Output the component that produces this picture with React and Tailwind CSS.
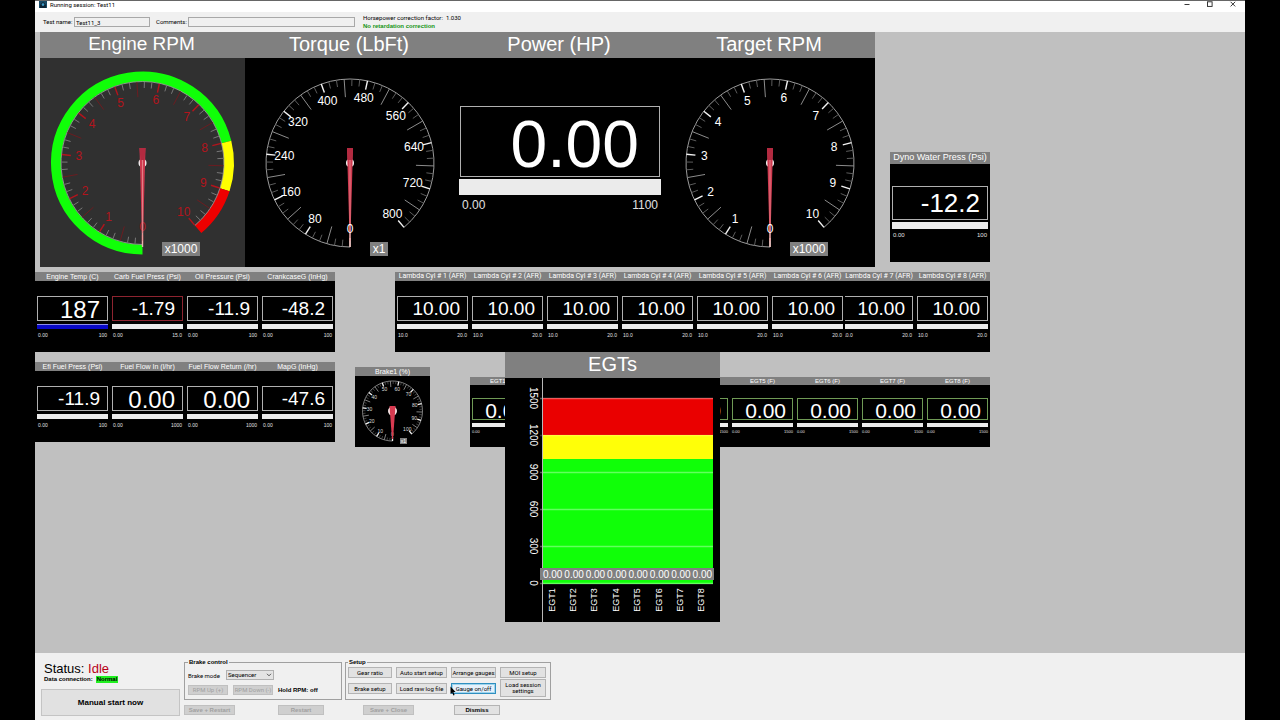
import React from "react";

const SANS = "font-['Liberation_Sans',Arial,sans-serif]";
const UI = "font-['Roboto','Liberation_Sans',sans-serif]";

/* ---------- dials ---------- */

const polar = (cx, cy, r, deg) => {
  const a = (deg * Math.PI) / 180;
  return [cx - r * Math.sin(a), cy + r * Math.cos(a)];
};

function arc(cx, cy, r, from, to) {
  const [x1, y1] = polar(cx, cy, r, from);
  const [x2, y2] = polar(cx, cy, r, to);
  return `M${x1} ${y1}A${r} ${r} 0 ${to - from > 180 ? 1 : 0} 1 ${x2} ${y2}`;
}

function Ticks({ cx, cy, r, red, lengths, widths }) {
  const out = [];
  for (let i = 0; i <= 60; i++) {
    const kind = i % 6 === 0 ? 0 : i % 3 === 0 ? 1 : 2;
    const deg = (i * 32) / 6;
    const [x1, y1] = polar(cx, cy, r, deg);
    const [x2, y2] = polar(cx, cy, r - lengths[kind], deg);
    const colors = red ? ["#b3141c", "#6b1c20", "#777777"] : ["#f4f4f4", "#8c8c8c", "#5c5c5c"];
    out.push(<line key={i} x1={x1} y1={y1} x2={x2} y2={y2} stroke={colors[kind]} strokeWidth={widths[kind]} />);
  }
  return <g>{out}</g>;
}

function Needle({ cx, cy }) {
  return (
    <g>
      <circle cx={cx} cy={cy} r="4" fill="#f4f4f4" />
      <path d={`M${cx} ${cy + 40}V${cy + 84}`} stroke="#e8b4b0" strokeWidth="1.4" />
      <path d={`M${cx - 3} ${cy - 15}H${cx + 3}L${cx + 0.6} ${cy + 70}H${cx - 0.6}Z`} fill="#cf3a50" />
      <path d={`M${cx - 3} ${cy - 15}H${cx + 3}L${cx + 2} ${cy - 3}H${cx - 2}Z`} fill="#b32a40" />
      <path d={`M${cx} ${cy - 3}V${cy + 78}`} stroke="#e88f92" strokeWidth="0.8" />
    </g>
  );
}

function Badge({ x, y, w, children }) {
  return (
    <g>
      <rect x={x} y={y} width={w} height="14" fill="#808080" />
      <text x={x + w / 2} y={y + 11} fontSize="12" fill="#fff" textAnchor="middle">{children}</text>
    </g>
  );
}

function PlainDial({ labels, unit, unitWidth }) {
  const cx = 105, cy = 105;
  return (
    <svg viewBox="0 0 210 209" className="block h-[209px] w-[210px]">
      <path d={arc(cx, cy, 84, 0, 320)} fill="none" stroke="#9a9a9a" strokeWidth="1" />
      <Ticks cx={cx} cy={cy} r={84} lengths={[9, 18, 7]} widths={[1.4, 1, 1]} />
      <Needle cx={cx} cy={cy} />
      {labels.map((t, i) => {
        const [x, y] = polar(cx, cy, 66, i * 32);
        return <text key={t} x={x} y={y + 4} fontSize="12" fill="#fff" textAnchor="middle">{t}</text>;
      })}
      <Badge x={125} y={184} w={unitWidth}>{unit}</Badge>
    </svg>
  );
}

function EngineDial() {
  const cx = 102.5, cy = 105;
  return (
    <svg viewBox="0 0 205 209" className="block h-[209px] w-[205px] bg-[#303030]">
      <path d={arc(cx, cy, 86.5, 0, 256)} fill="none" stroke="#10ff08" strokeWidth="10" />
      <path d={arc(cx, cy, 86.5, 256, 288)} fill="none" stroke="#ffff00" strokeWidth="10" />
      <path d={arc(cx, cy, 86.5, 288, 320)} fill="none" stroke="#ee0000" strokeWidth="10" />
      <path d={arc(cx, cy, 81.5, 0, 320)} fill="none" stroke="#a0a0a0" strokeWidth="0.8" />
      <Ticks cx={cx} cy={cy} r={81} red lengths={[9, 15, 6]} widths={[1.4, 1, 1]} />
      {[0, 1, 2, 3, 4, 5, 6, 7, 8, 9, 10].map((t) => {
        const [x, y] = polar(cx, cy, 64, t * 32);
        return <text key={t} x={x} y={y + 4} fontSize="12" fill="#b3141c" textAnchor="middle">{t}</text>;
      })}
      <Needle cx={cx} cy={cy} />
      <Badge x={122} y={184} w={38}>x1000</Badge>
    </svg>
  );
}

function BrakeDial() {
  const cx = 37.5, cy = 35;
  return (
    <svg viewBox="0 0 75 71" className="block h-[71px] w-[75px]">
      <path d={arc(cx, cy, 30, 0, 320)} fill="none" stroke="#9a9a9a" strokeWidth="0.8" />
      <Ticks cx={cx} cy={cy} r={30} lengths={[4, 6, 3]} widths={[1.3, 0.9, 0.7]} />
      {[0, 10, 20, 30, 40, 50, 60, 70, 80, 90, 100].map((t, i) => {
        const [x, y] = polar(cx, cy, 23, i * 32);
        return <text key={t} x={x} y={y + 2} fontSize="5" fill="#ddd" textAnchor="middle">{t}</text>;
      })}
      <circle cx={cx} cy={cy} r="4.5" fill="#f4e4e4" />
      <path d={`M${cx - 3} ${cy - 5}H${cx + 3}L${cx + 0.5} ${cy + 28}H${cx - 0.5}Z`} fill="#d83a50" />
      <rect x="45" y="62" width="7" height="6" fill="#808080" />
      <text x="48.5" y="67" fontSize="5" fill="#fff" textAnchor="middle">x1</text>
    </svg>
  );
}

/* ---------- numeric gauges ---------- */

const SIZES = {
  lg: {
    box: "mx-[5px] mt-[48px] h-[71px] pr-5 pt-[5px] text-[66px]",
    bar: "mx-[4px] mt-[2px] h-4",
    range: "mx-[7px] mt-[2px] text-[12px] leading-[16px]",
  },
  md: {
    title: "h-3 text-[9px] leading-[11px]",
    box: "mx-[2px] mt-[22px] h-[34px] pr-[7px] text-[26px]",
    bar: "mx-[2px] mt-[2px] h-[7px]",
    range: "mx-[3px] mt-[2px] text-[6px] leading-[8px]",
  },
  sm: {
    title: "h-[9px] text-[7px] leading-[9px]",
    box: "mx-[2px] mt-[15px] h-[25px] pr-[7px]",
    bar: "mx-[2px] mt-[3px] h-[5px]",
    range: "mx-[3px] mt-[3px] text-[5px] leading-[6px]",
  },
  xs: {
    title: "h-2 text-[6px] leading-[8px]",
    box: "mx-[2px] mt-[13px] h-[22px] pr-[6px] pt-[3px]",
    bar: "mx-[2px] mt-[3px] h-1",
    range: "mx-[2px] mt-[2px] text-[4px] leading-[6px]",
  },
};

function Gauge({ title, value, min, max, size, className = "", valueClass = "", titleClass = "", border = "border-[#b0b0b0]", barClass = "bg-[#ebebeb]" }) {
  const s = SIZES[size];
  return (
    <section className={`shrink-0 bg-black text-white ${className}`}>
      {title && <h3 className={`overflow-hidden bg-[#808080] text-center whitespace-nowrap ${s.title} ${titleClass}`}>{title}</h3>}
      <div className={`flex items-center justify-end border leading-none ${s.box} ${border} ${valueClass}`}>{value}</div>
      <div className={`${s.bar} ${barClass}`} />
      <div className={`flex justify-between text-[#e0e0e0] ${s.range}`}>
        <span>{min}</span>
        <span>{max}</span>
      </div>
    </section>
  );
}

const PRESSURES = [
  ["Engine Temp (C)", "187", "100", true],
  ["Carb Fuel Press (Psi)", "-1.79", "15.0", false],
  ["Oil Pressure (Psi)", "-11.9", "100", false],
  ["CrankcaseG (InHg)", "-48.2", "100", false],
];
const FUEL = [
  ["Efi Fuel Press (Psi)", "-11.9", "100", false],
  ["Fuel Flow In (l/hr)", "0.00", "1000", true],
  ["Fuel Flow Return (/hr)", "0.00", "1000", true],
  ["MapG (InHg)", "-47.6", "100", false],
];

function SmallRow({ items }) {
  return (
    <div className="flex h-20 bg-black">
      {items.map(([title, value, max, tall]) => (
        <Gauge
          key={title}
          size="sm"
          className="w-[75px]"
          title={title}
          value={value}
          min="0.00"
          max={max}
          valueClass={tall ? "text-[24px] pt-[3px]" : "text-[19px]"}
          border={title.startsWith("Carb") ? "border-[#8e2430]" : undefined}
          barClass={title.startsWith("Engine") ? "border-t border-[#8c8ce8] bg-[#0808c8]" : undefined}
        />
      ))}
    </div>
  );
}

/* ---------- EGT chart ---------- */

const CYLINDERS = [1, 2, 3, 4, 5, 6, 7, 8];

function EgtChart() {
  const x0 = 37, x1 = 208, base = 205, step = 37;
  const col = (x1 - x0) / 8;
  return (
    <section className="absolute -top-[25px] left-[35px] w-[215px] bg-black text-white">
      <h2 className="h-[26px] bg-[#808080] text-center text-[20px] leading-[24px]">EGTs</h2>
      <svg viewBox="0 0 215 244" className="block h-[244px] w-[215px]">
        <rect x={x0} y="20" width={x1 - x0} height="37" fill="#ea0000" />
        <rect x={x0} y="57" width={x1 - x0} height="24" fill="#ffff08" />
        <rect x={x0} y="81" width={x1 - x0} height="125" fill="#10ff08" />
        {[0, 300, 600, 900, 1200, 1500].map((v, i) => (
          <g key={v}>
            <path d={`M${x0 - 2} ${base - i * step + 0.5}H${x1}`} stroke="#ffffff" strokeOpacity={v === 1200 ? 0.2 : 0.35} strokeWidth="1.4" />
            <text transform={`translate(25 ${base - i * step}) rotate(90)`} fontSize="10" fill="#fff" textAnchor="middle">{v}</text>
          </g>
        ))}
        <path d="M37.5 0V244" stroke="#b8b8b8" strokeWidth="1" />
        <rect x={x0 - 2} y="190" width={x1 - x0 + 3} height="12" fill="#808080" />
        {CYLINDERS.map((n, i) => (
          <g key={n}>
            <text x={x0 + col * (i + 0.5)} y="200" fontSize="10" fill="#fff" textAnchor="middle">0.00</text>
            <text transform={`translate(${x0 + col * (i + 0.5) + 2} 222) rotate(-90)`} fontSize="9" fill="#fff" textAnchor="middle">{`EGT${n}`}</text>
          </g>
        ))}
      </svg>
    </section>
  );
}

/* ---------- window chrome ---------- */

function TitleBar() {
  return (
    <div className="flex h-3 items-start border-t border-[#666] bg-white pl-[4px]">
      <svg viewBox="0 0 8 8" className="h-2 w-2">
        <rect width="8" height="7" fill="#174a66" />
        <path d="M1 7V4L3 1.5H5L7 4V7Z" fill="#0c2434" />
        <circle cx="4" cy="3.6" r="1.3" fill="#3f9cc8" />
      </svg>
      <h1 className={`ml-[3px] text-[6px] leading-[7px] text-black ${UI}`}>Running session: Test11</h1>
      <div className="ml-auto flex gap-[15px] pr-[8px] text-[#222]">
        <button aria-label="Minimize" className="h-[7px] w-2">
          <svg viewBox="0 0 8 7" className="h-[7px] w-2"><path d="M1.5 3.5H6.5" stroke="currentColor" strokeWidth="0.9" /></svg>
        </button>
        <button aria-label="Maximize" className="h-[7px] w-2">
          <svg viewBox="0 0 8 7" className="h-[7px] w-2"><rect x="1.5" y="0.8" width="4.6" height="4.6" fill="none" stroke="currentColor" strokeWidth="0.9" /></svg>
        </button>
        <button aria-label="Close" className="h-[7px] w-2">
          <svg viewBox="0 0 8 7" className="h-[7px] w-2"><path d="M1.6 0.8L6.2 5.4M6.2 0.8L1.6 5.4" stroke="currentColor" strokeWidth="0.9" /></svg>
        </button>
      </div>
    </div>
  );
}

function TestBar() {
  return (
    <div className={`flex h-5 items-center bg-[#f0f0f0] pl-2 text-[6px] leading-[8px] text-black ${UI}`}>
      <label htmlFor="test-name" className="w-[31px]">Test name:</label>
      <input id="test-name" defaultValue="Test11_3" className="h-[10px] w-[76px] border border-[#a8a8a8] bg-[#f0f0f0] px-px" />
      <label htmlFor="comments" className="ml-[6px] w-8">Comments:</label>
      <input id="comments" className="h-[10px] w-[167px] border border-[#a8a8a8] bg-[#f0f0f0] px-px" />
      <div className="ml-2">
        <p className="flex gap-[3px]"><span>Horsepower correction factor:</span><span>1.030</span></p>
        <p className={`font-bold text-[#149414] ${SANS}`}>No retardation correction</p>
      </div>
    </div>
  );
}

function Btn({ children, className = "", disabled = false }) {
  const look = disabled ? "border-[#c0c0c0] bg-[#cfcfcf] text-[#a0a0a0]" : "border-[#b4b4b4] bg-[#e2e2e2] text-black";
  return (
    <button disabled={disabled} className={`flex items-center justify-center border text-center leading-[6px] whitespace-nowrap ${look} ${className}`}>
      {children}
    </button>
  );
}

function Footer() {
  return (
    <footer className={`flex h-[67px] items-start bg-[#f0f0f0] pl-[6px] text-[6px] text-black ${UI}`}>
      <div className={`w-[139px] pt-2 ${SANS}`}>
        <p className="pl-[3px] text-[13px] leading-[15px]">Status: <span className="text-[#b80018]">Idle</span></p>
        <p className="flex items-center gap-[3px] pl-[3px] font-bold leading-[7px]">
          Data connection: <span className="bg-[#20f020] px-px">Normal</span>
        </p>
        <button className="mt-[6px] h-[27px] w-full border border-[#c4c4c4] bg-[#e1e1e1] text-[8px] font-bold">Manual start now</button>
      </div>
      <div className="ml-[4px] pt-[5px]">
        <div className="flex gap-[3px]">
          <fieldset className="h-[42px] w-[158px] border border-[#a0a0a0] px-[3px]">
            <legend className={`px-px font-bold leading-[8px] ${SANS}`}>Brake control</legend>
            <div className="mt-[4px] flex items-center">
              <label htmlFor="brake-mode" className="w-[38px]">Brake mode</label>
              <div className="relative">
                <select id="brake-mode" className="block h-[10px] w-12 appearance-none border border-[#b0b0b0] bg-[#e4e4e4] pl-px leading-[8px]">
                  <option>Sequencer</option>
                </select>
                <svg viewBox="0 0 6 4" className="pointer-events-none absolute top-[3px] right-[2px] h-1 w-[6px]"><path d="M1 0.8L3 2.8L5 0.8" fill="none" stroke="#333" strokeWidth="0.8" /></svg>
              </div>
            </div>
            <div className="mt-[5px] flex items-center gap-[5px]">
              <Btn disabled className="h-[10px] w-10">RPM Up (+)</Btn>
              <Btn disabled className="h-[10px] w-10">RPM Down (-)</Btn>
              <span className={`font-bold ${SANS}`}>Hold RPM: off</span>
            </div>
          </fieldset>
          <fieldset className="h-[42px] w-[206px] border border-[#a0a0a0] pl-[2px]">
            <legend className={`px-px font-bold leading-[8px] ${SANS}`}>Setup</legend>
            <div className="mt-px flex gap-[4px]">
              <div className="flex w-11 flex-col gap-[5px]">
                <Btn className="h-[11px]">Gear ratio</Btn>
                <Btn className="h-[11px]">Brake setup</Btn>
              </div>
              <div className="flex w-[51px] flex-col gap-[5px]">
                <Btn className="h-[11px]">Auto start setup</Btn>
                <Btn className="h-[11px]">Load raw log file</Btn>
              </div>
              <div className="relative flex w-[45px] flex-col gap-[5px]">
                <Btn className="h-[11px]">Arrange gauges</Btn>
                <button className="h-[11px] border border-[#2f8fc0] bg-[#e5f1fb] leading-[6px] outline-1 -outline-offset-2 outline-[#9fd4ec]">Gauge on/off</button>
                <svg viewBox="0 0 6 10" className="absolute top-[19px] -left-px h-[10px] w-[6px]"><path d="M0.5 0.5V8L2.2 6.5L3.4 9.4L4.6 8.9L3.4 6.1H5.6Z" fill="#000" /></svg>
              </div>
              <div className="flex w-[46px] flex-col gap-px">
                <Btn className="h-[11px]">MOI setup</Btn>
                <Btn className="h-[18px]">Load session<br />settings</Btn>
              </div>
            </div>
          </fieldset>
        </div>
        <div className={`mt-[5px] flex font-bold ${SANS}`}>
          <Btn disabled className="h-[10px] w-[51px]">Save + Restart</Btn>
          <Btn disabled className="ml-[43px] h-[10px] w-[46px]">Restart</Btn>
          <Btn disabled className="ml-[39px] h-[10px] w-[51px]">Save + Close</Btn>
          <Btn className="ml-[40px] h-[10px] w-[46px]">Dismiss</Btn>
        </div>
      </div>
    </footer>
  );
}

function MainCell({ title, width, titleSize = "text-[20px]", children }) {
  return (
    <section className={`shrink-0 bg-black ${width}`}>
      <h2 className={`h-[26px] bg-[#808080] pr-[2px] text-center leading-[24px] text-white ${titleSize}`}>{title}</h2>
      {children}
    </section>
  );
}

export default function App() {
  return (
    <div className={`flex min-h-screen flex-col bg-black px-[35px] ${SANS}`}>
      <TitleBar />
      <TestBar />
      <main className="flex-1 overflow-hidden bg-[#c0c0c0]">
        <div className="flex items-start">
          <div className="ml-[5px] flex">
            <MainCell title="Engine RPM" width="w-[205px]" titleSize="text-[19px]"><EngineDial /></MainCell>
            <MainCell title="Torque (LbFt)" width="w-[210px]">
              <PlainDial labels={[0, 80, 160, 240, 320, 400, 480, 560, 640, 720, 800]} unit="x1" unitWidth={18} />
            </MainCell>
            <MainCell title="Power (HP)" width="w-[210px]">
              <Gauge size="lg" value="0.00" min="0.00" max="1100" />
            </MainCell>
            <MainCell title="Target RPM" width="w-[210px]">
              <PlainDial labels={[0, 1, 2, 3, 4, 5, 6, 7, 8, 9, 10]} unit="x1000" unitWidth={38} />
            </MainCell>
          </div>
          <Gauge size="md" className="mt-[120px] ml-[15px] h-[110px] w-[100px]" title="Dyno Water Press (Psi)" value="-12.2" min="0.00" max="100" />
        </div>

        <div className="mt-[5px] flex items-start gap-[60px]">
          <SmallRow items={PRESSURES} />
          <div className="flex h-20 bg-black">
            {CYLINDERS.map((n) => (
              <Gauge
                key={n}
                size="sm"
                className={n === 6 ? "relative z-10 w-[75px]" : n === 7 ? "-ml-[5px] w-[75px]" : "w-[75px]"}
                title={`Lambda Cyl # ${n} (AFR)`}
                titleClass={n === 7 ? `pl-[3px] ${UI}` : UI}
                value="10.00"
                min="10.0"
                max="20.0"
                valueClass="text-[19px]"
              />
            ))}
          </div>
        </div>

        <div className="mt-[10px] flex items-start">
          <SmallRow items={FUEL} />
          <section className="mt-[5px] ml-5 w-[75px] bg-black">
            <h3 className="h-[9px] bg-[#808080] text-center text-[7px] leading-[9px] text-white">Brake1 (%)</h3>
            <BrakeDial />
          </section>
          <div className="relative mt-[15px] ml-10 flex h-[70px] bg-black">
            {CYLINDERS.map((n) => (
              <Gauge
                key={n}
                size="xs"
                className="w-[65px]"
                title={`EGT${n} (F)`}
                value="0.00"
                min="0.00"
                max="1500"
                border="border-[#6f9a55]"
                valueClass="text-[21px]"
              />
            ))}
            <EgtChart />
          </div>
        </div>
      </main>
      <Footer />
    </div>
  );
}
